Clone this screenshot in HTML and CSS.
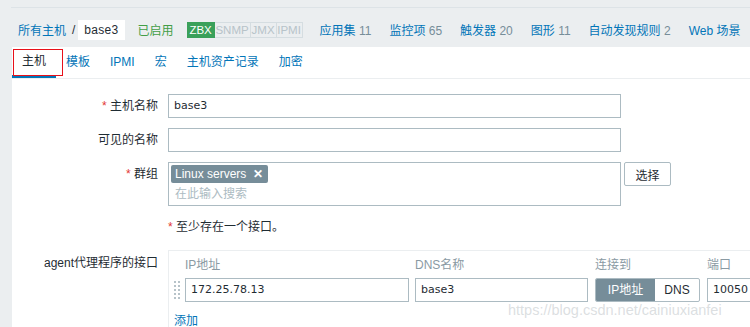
FILE: index.html
```html
<!DOCTYPE html>
<html>
<head>
<meta charset="utf-8">
<link rel="stylesheet" href="styles.css">
</head>
<body>
<div class="topbar"></div>
<div class="crumbs">
  <a class="link crumb-root">所有主机</a>
  <span class="sep">/</span>
  <span class="crumb-cur">base3</span>
  <span class="enabled">已启用</span>
  <span class="badges">
    <span class="badge on b-zbx">ZBX</span><span class="badge b-snmp">SNMP</span><span class="badge b-jmx">JMX</span><span class="badge b-ipmi">IPMI</span>
  </span>
  <nav class="nav">
    <a class="link">应用集 <span class="count">11</span></a>
    <a class="link">监控项 <span class="count">65</span></a>
    <a class="link">触发器 <span class="count">20</span></a>
    <a class="link">图形 <span class="count">11</span></a>
    <a class="link">自动发现规则 <span class="count">2</span></a>
    <a class="link">Web 场景</a>
  </nav>
</div>
<div class="content">
  <div class="tabs">
    <span class="tab active">主机<span class="mark"></span></span>
    <span class="tab">模板</span>
    <span class="tab">IPMI</span>
    <span class="tab">宏</span>
    <span class="tab">主机资产记录</span>
    <span class="tab">加密</span>
  </div>
  <div class="form">
    <div class="row">
      <label class="lbl"><span class="req">*</span> 主机名称</label>
      <div class="input wide">base3</div>
    </div>
    <div class="row">
      <label class="lbl">可见的名称</label>
      <div class="input wide"></div>
    </div>
    <div class="row">
      <label class="lbl"><span class="req">*</span> 群组</label>
      <div class="multi">
        <div class="tags"><span class="tag">Linux servers <span class="x">✕</span></span></div>
        <div class="ph">在此输入搜索</div>
      </div>
      <button class="btn">选择</button>
    </div>
    <div class="row notice-row">
      <div class="lbl"></div>
      <div class="notice"><span class="req">*</span> 至少存在一个接口。</div>
    </div>
    <div class="row iface-row">
      <label class="lbl agent">agent代理程序的接口</label>
      <div class="iface">
        <div class="grid">
          <span></span>
          <span class="th">IP地址</span>
          <span class="th">DNS名称</span>
          <span class="th">连接到</span>
          <span class="th">端口</span>
          <svg class="drag" width="6" height="18" viewBox="0 0 6 18"><g fill="#b7c3c9"><rect x="0" y="0" width="2" height="2"/><rect x="4" y="0" width="2" height="2"/><rect x="0" y="4" width="2" height="2"/><rect x="4" y="4" width="2" height="2"/><rect x="0" y="8" width="2" height="2"/><rect x="4" y="8" width="2" height="2"/><rect x="0" y="12" width="2" height="2"/><rect x="4" y="12" width="2" height="2"/><rect x="0" y="16" width="2" height="2"/><rect x="4" y="16" width="2" height="2"/></g></svg>
          <div class="input">172.25.78.13</div>
          <div class="input">base3</div>
          <div class="toggle"><span class="seg sel">IP地址</span><span class="seg">DNS</span></div>
          <div class="input port">10050</div>
        </div>
        <a class="link add">添加</a>
      </div>
    </div>
  </div>
  <div class="watermark">https://blog.csdn.net/cainiuxianfei</div>
</div>
</body>
</html>
```
FILE: styles.css
```css
* { box-sizing: border-box; }
html, body { margin: 0; padding: 0; overflow: hidden; }
body {
  background: #ebeef0;
  font-family: "Liberation Sans", Arial, "Noto Sans CJK SC", sans-serif;
  font-size: 12px;
  color: #1f2c33;
  width: 750px;
  height: 327px;
  position: relative;
}
.topbar { height: 8px; margin-left: 11px; border-bottom: 1px solid #dde3e7; }
.crumbs {
  display: flex;
  align-items: center;
  height: 39px;
  padding: 4px 0 0 18px;
  white-space: nowrap;
}
.link { color: #0275b8; text-decoration: none; }
.sep { margin: 0 3px 0 6px; color: #1f2c33; }
.crumb-cur {
  background: #fff;
  height: 20px;
  line-height: 20px;
  padding: 0 6px;
  color: #1f2c33;
  letter-spacing: 0.3px;
}
.enabled { color: #429e47; margin-left: 13px; }
.badges { display: flex; margin-left: 13px; }
.badge {
  height: 16px;
  line-height: 14px;
  border: 1px solid #d5dde1;
  border-left: none;
  color: #b7c3c9;
  font-size: 11.5px;
  text-align: center;
}
.b-zbx { width: 28px; }
.b-snmp { width: 36px; }
.b-jmx { width: 26px; }
.b-ipmi { width: 26px; }
.badge.on { background: #3aa05a; border: 1px solid #3aa05a; color: #fff; }
.nav { display: flex; gap: 18px; margin-left: 17px; }
.count { color: #768d99; }

.content {
  margin-left: 12px;
  background: #fff;
  height: 280px;
}
.tabs {
  display: flex;
  height: 32px;
  border-bottom: 1px solid #ebeef0;
}
.tab {
  position: relative;
  padding: 0 10px;
  line-height: 30px;
  color: #0275b8;
}
.tab.active { color: #1f2c33; border-bottom: 3px solid #0275b8; line-height: 28px; }
.mark {
  position: absolute;
  left: 1px; top: 2px;
  width: 50px; height: 27px;
  border: 1px solid #e8101a;
}
.form { padding-top: 15px; }
.row { display: flex; gap: 10px; margin-bottom: 10px; align-items: flex-start; }
.lbl { width: 146px; text-align: right; line-height: 24px; flex: none; }
.req { color: #e33734; }
.input {
  height: 24px;
  line-height: 22px;
  border: 1px solid #acbbc2;
  padding: 0 5px;
  background: #fff;
  font-family: "DejaVu Sans", sans-serif;
  font-size: 11px;
  white-space: nowrap;
  overflow: hidden;
}
.wide { width: 453px; }
.multi {
  width: 453px;
  height: 44px;
  border: 1px solid #acbbc2;
  padding: 2px 2px 0;
}
.tags { height: 18px; }
.tag {
  display: inline-block;
  height: 18px;
  line-height: 18px;
  background: #768d99;
  color: #fff;
  border-radius: 2px;
  padding: 0 5px 0 4px;
  font-size: 12px;
}
.x { font-weight: bold; margin-left: 3px; }
.ph { color: #acbbc2; padding-left: 4px; line-height: 20px; margin-top: 1px; }
.btn {
  margin-left: -7px;
  height: 24px;
  width: 47px;
  border: 1px solid #acbbc2;
  background: #fff;
  border-radius: 2px;
  font-family: inherit;
  font-size: 12px;
  color: #1f2c33;
  padding: 0;
}
.notice-row { margin-top: 14px; margin-bottom: 16px; }
.notice-row .lbl { line-height: 14px; }
.notice { line-height: 14px; }
.agent { line-height: 14px; padding-top: 6px; }
.iface {
  width: 600px;
  border-top: 1px solid #ebeef0;
  border-left: 1px solid #ebeef0;
  padding: 7px 0 0 5px;
}
.grid {
  display: grid;
  grid-template-columns: 6px 224px 174px 107px 60px;
  column-gap: 5px;
  row-gap: 6px;
  align-items: center;
}
.grid > :nth-child(3), .grid > :nth-child(8) { margin-left: 1px; }
.grid > :nth-child(4), .grid > :nth-child(9) { margin-left: 2px; }
.grid > :nth-child(5), .grid > :nth-child(10) { margin-left: 2px; }
.th { color: #8a9aa3; line-height: 14px; }
.drag { display: block; }
.toggle { display: flex; height: 24px; border: 1px solid #acbbc2; border-radius: 2px; overflow: hidden; }
.seg { flex: 1; text-align: center; line-height: 22px; color: #1f2c33; }
.seg.sel { background: #768d99; color: #fff; flex: none; width: 59px; }
.port { width: 60px; }
.add { display: block; margin-top: 12px; line-height: 14px; }
.watermark {
  position: absolute;
  left: 508px;
  top: 302px;
  font-size: 14.5px;
  color: rgba(190, 196, 200, 0.55);
  white-space: nowrap;
}
```
